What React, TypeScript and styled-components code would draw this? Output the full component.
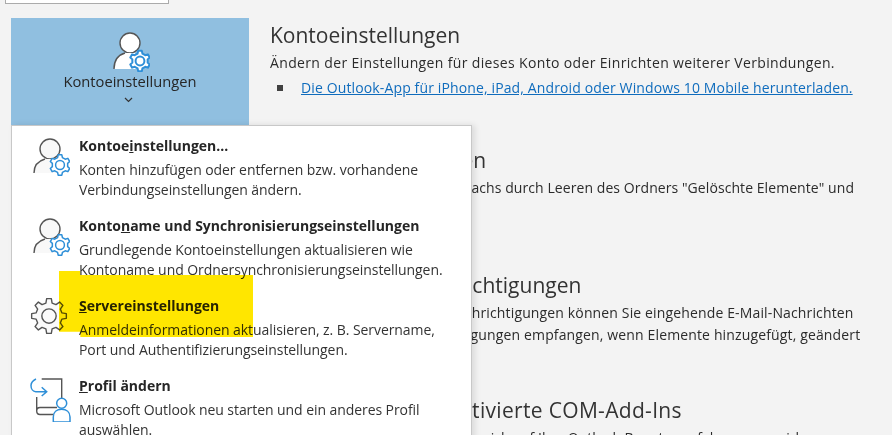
import styled, { createGlobalStyle } from "styled-components";

const GlobalStyle = createGlobalStyle`
  html, body {
    margin: 0;
    height: 435px;
    overflow: hidden;
    background: #f3f3f3;
    font-family: "Open Sans", "Noto Sans", sans-serif;
    color: #262626;
  }
`;

const Page = styled.div`
  position: relative;
  display: flex;
  height: 435px;
  overflow: hidden;
  background: #f3f3f3;
`;

const LeftColumn = styled.div`
  width: 270px;
  flex: none;
`;

const AccountSelect = styled.div`
  box-sizing: border-box;
  width: 164px;
  height: 4px;
  margin-left: 5px;
  background: #fff;
  border: 1px solid #ababab;
  border-top: 0;
`;

const Tile = styled.div`
  box-sizing: border-box;
  width: 238px;
  height: 110px;
  margin: 14px 0 0 11px;
  padding-top: 14px;
  background: #90bfe0;
  display: flex;
  flex-direction: column;
  align-items: center;
`;

const TileLabel = styled.div`
  font-size: 14.7px;
  line-height: 18px;
  color: #262626;
`;

const Chevron = styled.svg`
  margin: 7px 3px 0 0;
`;

const Content = styled.div`
  flex: 1;
  min-width: 0;
  padding-top: 20px;
`;

const Section = styled.section`
  height: 125px;
  white-space: nowrap;
`;

const Heading = styled.h2<{ $spacing?: number }>`
  margin: 0;
  font-size: 21px;
  line-height: 31px;
  font-weight: 400;
  color: #333;
  letter-spacing: ${(p) => p.$spacing ?? 0}px;
`;

const Body = styled.p<{ $spacing?: number }>`
  margin: 2px 0 0;
  font-size: 14px;
  line-height: 20px;
  color: #2b2b2b;
  letter-spacing: ${(p) => p.$spacing ?? 0}px;
`;

const LinkRow = styled.div`
  display: flex;
  align-items: center;
  margin: 5px 0 0 7px;
  gap: 18px;
  font-size: 14px;
  line-height: 20px;
  letter-spacing: 0.13px;
`;

const Bullet = styled.span`
  width: 6px;
  height: 6px;
  background: #404040;
`;

const Link = styled.a`
  color: #0f6cbd;
  text-decoration: underline;
`;

const Menu = styled.div`
  position: absolute;
  left: 11px;
  top: 125px;
  box-sizing: border-box;
  width: 461px;
  height: 330px;
  background: #fff;
  border: 1px solid #c8c8c8;
  border-bottom: 0;
  box-shadow: 3px 0 6px rgba(0, 0, 0, 0.1);
  padding-top: 10px;
`;

const MenuItem = styled.div`
  display: flex;
  height: 80px;
`;

const IconCell = styled.div`
  width: 67px;
  flex: none;
  display: flex;
  justify-content: center;
  align-items: flex-start;
  padding: 2px 0 0 9px;
  box-sizing: border-box;
`;

const MenuText = styled.div`
  flex: 1;
  min-width: 0;
`;

const MenuTitle = styled.div`
  font-size: 14px;
  line-height: 20px;
  font-weight: 700;
  color: #262626;
  margin-bottom: 4px;
`;

const MenuDesc = styled.div`
  font-size: 14px;
  line-height: 20px;
  letter-spacing: -0.07px;
  color: #333;
`;

const Marker = styled.div`
  position: absolute;
  left: 59px;
  top: 271px;
  width: 194px;
  height: 66px;
  background: #ffe600;
  mix-blend-mode: multiply;
  clip-path: polygon(0 0, 11% 0, 11% 6%, 100% 6%, 100% 100%, 11% 100%, 11% 92%, 0 92%);
`;

type GearProps = { x: number; y: number; r: number; teeth: number; hole: number; color: string; sw: number; fill?: string };

const Gear = ({ x, y, r, teeth, hole, color, sw, fill = "#fff" }: GearProps) => {
  const pts: string[] = [];
  const step = (2 * Math.PI) / teeth;
  const at = (rad: number, a: number) => `${x + rad * Math.cos(a)},${y + rad * Math.sin(a)}`;
  for (let i = 0; i < teeth; i++) {
    const a = i * step - Math.PI / 2;
    pts.push(at(r * 0.76, a - step * 0.3));
    pts.push(at(r, a - step * 0.17));
    pts.push(at(r, a + step * 0.17));
    pts.push(at(r * 0.76, a + step * 0.3));
  }
  return (
    <g fill={fill} stroke={color} strokeWidth={sw} strokeLinejoin="round">
      <polygon points={pts.join(" ")} />
      <circle cx={x} cy={y} r={r * hole} fill="none" />
    </g>
  );
};

const UserGearIcon = ({ tile }: { tile?: boolean }) => (
  <svg width="40" height="40" viewBox="0 0 40 40">
    <circle cx="20" cy="11" r="10" fill={tile ? "#fff" : "#f8f8f8"} stroke="#555" strokeWidth="1.4" />
    <path d={tile ? "M4 37c0-8 4-14 11-16h10l6 16z" : "M4 35c0-8 4-12 11-14h10l6 14z"} fill={tile ? "#fff" : "#f8f8f8"} />
    <path d={tile ? "M4 37c0-8 4-14 11-16" : "M4 35c0-8 4-12 11-14"} fill="none" stroke="#555" strokeWidth="1.4" />
    <Gear x={30} y={tile ? 29 : 27} r={10.3} teeth={6} hole={0.43} color="#2e8fd8" sw={tile ? 2 : 1.5} />
  </svg>
);

const ServerGearIcon = () => (
  <svg width="40" height="40" viewBox="0 0 40 40">
    <Gear x={19} y={18} r={17.5} teeth={8} hole={0.41} color="#555" sw={1.4} fill="#fafafa" />
  </svg>
);

const ProfileIcon = () => (
  <svg width="44" height="44" viewBox="-1 3 44 44">
    <path
      d="M12.7 4h20v24M7.7 22v14c0 2 1.300 3.500 3.300 3.500h17M7.700 36c0-2 1.300-3.500 3.300-3.500h17"
      fill="none"
      stroke="#555"
      strokeWidth="1.4"
    />
    <path
      d="M7 4C4 5.500 2 7.500 2 10.500c0 3.500 2 6.200 4.700 6.200h11M12.700 12.300l5 4.400-5 4.300"
      fill="none"
      stroke="#2e8fd8"
      strokeWidth="1.5"
    />
    <path d="M24.300 42c0-5 3.500-7.700 8.300-7.700S41 37 41 42v5H24.300z" fill="#fff" stroke="#2e8fd8" strokeWidth="1.5" />
    <circle cx="32.700" cy="28.300" r="5" fill="#fff" stroke="#2e8fd8" strokeWidth="1.5" />
  </svg>
);

const items = [
  {
    icon: <UserGearIcon />,
    title: <>Kontoe<u>i</u>nstellungen...</>,
    desc: ["Konten hinzufügen oder entfernen bzw. vorhandene", "Verbindungseinstellungen ändern."],
  },
  {
    icon: <UserGearIcon />,
    title: <>Konto<u>n</u>ame und Synchronisierungseinstellungen</>,
    desc: ["Grundlegende Kontoeinstellungen aktualisieren wie", "Kontoname und Ordnersynchronisierungseinstellungen."],
  },
  {
    icon: <ServerGearIcon />,
    title: <><u>S</u>ervereinstellungen</>,
    desc: ["Anmeldeinformationen aktualisieren, z. B. Servername,", "Port und Authentifizierungseinstellungen."],
  },
  {
    icon: <ProfileIcon />,
    title: <><u>P</u>rofil ändern</>,
    desc: ["Microsoft Outlook neu starten und ein anderes Profil", "auswählen."],
  },
];

export default function App() {
  return (
    <Page>
      <GlobalStyle />
      <LeftColumn>
        <AccountSelect />
        <Tile>
          <UserGearIcon tile />
          <TileLabel>Kontoeinstellungen</TileLabel>
          <Chevron width="9" height="6" viewBox="0 0 9 6">
            <path d="M1 1l3.500 3.500L8 1" fill="none" stroke="#333" strokeWidth="1.2" />
          </Chevron>
        </Tile>
      </LeftColumn>
      <Content>
        <Section>
          <Heading>Kontoeinstellungen</Heading>
          <Body $spacing={0.35}>Ändern der Einstellungen für dieses Konto oder Einrichten weiterer Verbindungen.</Body>
          <LinkRow>
            <Bullet />
            <Link>Die Outlook-App für iPhone, iPad, Android oder Windows 10 Mobile herunterladen.</Link>
          </LinkRow>
        </Section>
        <Section>
          <Heading>Postfacheinstellungen</Heading>
          <Body $spacing={0.07}>Verwalten der Größe des Postfachs durch Leeren des Ordners "Gelöschte Elemente" und</Body>
        </Section>
        <Section>
          <Heading>Regeln und Benachrichtigungen</Heading>
          <Body $spacing={0.14}>Mithilfe von Regeln und Benachrichtigungen können Sie eingehende E-Mail-Nachrichten</Body>
          <Body $spacing={0.14}>organisieren und Benachrichtigungen empfangen, wenn Elemente hinzugefügt, geändert</Body>
        </Section>
        <Section>
          <Heading $spacing={0.32}>Langsame und deaktivierte COM-Add-Ins</Heading>
          <Body>Verwalten von COM-Add-Ins, die sich auf Ihre Outlook-Benutzererfahrung auswirken.</Body>
        </Section>
      </Content>
      <Menu>
        {items.map((item, i) => (
          <MenuItem key={i}>
            <IconCell>{item.icon}</IconCell>
            <MenuText>
              <MenuTitle>{item.title}</MenuTitle>
              {item.desc.map((line) => (
                <MenuDesc key={line}>{line}</MenuDesc>
              ))}
            </MenuText>
          </MenuItem>
        ))}
      </Menu>
      <Marker />
    </Page>
  );
}
